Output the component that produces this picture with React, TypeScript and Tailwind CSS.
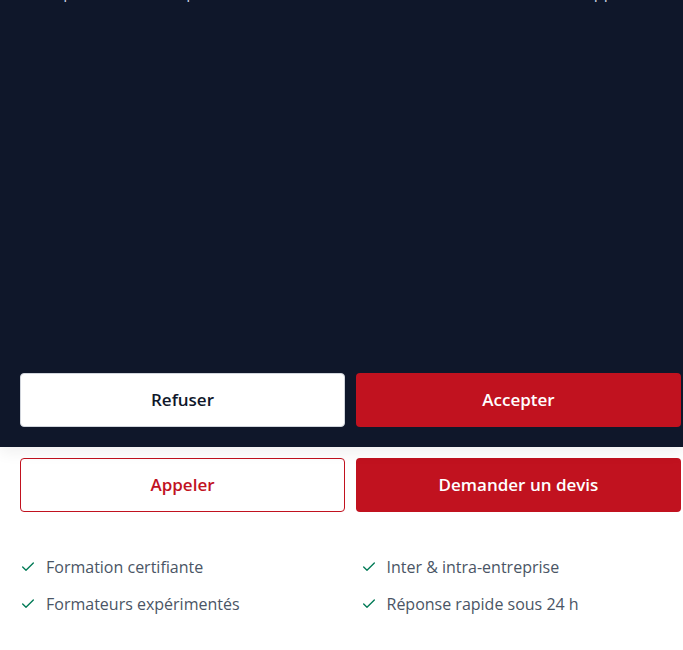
import { Check } from 'lucide-react';

const perks = [
  'Formation certifiante',
  'Inter & intra-entreprise',
  'Formateurs expérimentés',
  'Réponse rapide sous 24 h',
];

export default function App() {
  return (
    <div className="min-h-screen bg-white font-['Open_Sans',sans-serif] overflow-hidden">
      {/* Cookie banner */}
      <div className="relative z-10 flex h-[447px] flex-col justify-between bg-[#0f172a] pb-5 pl-5 shadow-[0_6px_14px_rgba(0,0,0,0.06)]">
        <p className="-mt-[20px] whitespace-nowrap text-[16px] leading-6 text-slate-300">
          Nous permettons aux partenaires de mesurer l'audience d'un site sur votre appareil.
        </p>
        <div className="grid w-[661px] grid-cols-2 gap-[11px]">
          <button className="h-[54px] rounded-[4px] border border-gray-300 bg-white text-[17px] font-semibold text-[#0f172a]">
            Refuser
          </button>
          <button className="h-[54px] rounded-[4px] bg-[#c1121f] text-[17px] font-semibold text-white">
            Accepter
          </button>
        </div>
      </div>

      {/* Call to action */}
      <div className="pl-5 pt-[11px]">
        <div className="grid w-[661px] grid-cols-2 gap-[11px]">
          <button className="h-[54px] rounded-[4px] border border-[#c1121f] bg-white text-[17px] font-semibold text-[#c1121f]">
            Appeler
          </button>
          <button className="h-[54px] rounded-[4px] bg-[#c1121f] text-[17px] font-semibold text-white">
            Demander un devis
          </button>
        </div>

        <ul className="mt-[43px] grid w-[661px] grid-cols-2 gap-x-5 gap-y-[13px]">
          {perks.map((p) => (
            <li key={p} className="flex items-center gap-[10px] text-[16px] leading-6 text-gray-600">
              <Check className="h-4 w-4 shrink-0 text-emerald-700" strokeWidth={2} />
              {p}
            </li>
          ))}
        </ul>
      </div>
    </div>
  );
}
